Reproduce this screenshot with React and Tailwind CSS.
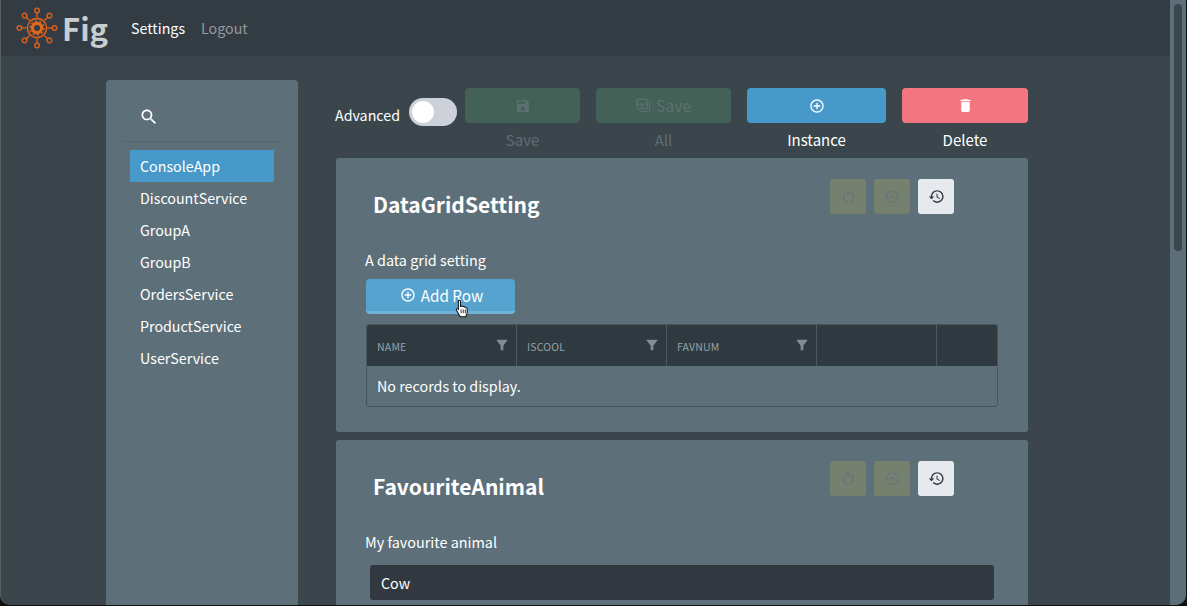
import React from "react";

const P = {
  save: "M17 3H5c-1.11 0-2 .9-2 2v14c0 1.1.89 2 2 2h14c1.1 0 2-.9 2-2V7l-4-4zm-5 16c-1.66 0-3-1.34-3-3s1.34-3 3-3 3 1.34 3 3-1.34 3-3 3zm3-10H5V5h10v4z",
  del: "M6 19c0 1.1.9 2 2 2h8c1.1 0 2-.9 2-2V7H6v12zM19 4h-3.5l-1-1h-5l-1 1H5v2h14V4z",
  history: "M13 3c-4.97 0-9 4.03-9 9H1l3.89 3.89.07.14L9 12H6c0-3.87 3.13-7 7-7s7 3.13 7 7-3.13 7-7 7c-1.93 0-3.68-.79-4.94-2.06l-1.42 1.42C8.27 19.99 10.51 21 13 21c4.97 0 9-4.03 9-9s-4.03-9-9-9zm-1 5v5l4.28 2.54.72-1.21-3.5-2.08V8H12z",
  backup: "M14 12c0-1.1-.9-2-2-2s-2 .9-2 2 .9 2 2 2 2-.9 2-2zm-2-9c-4.97 0-9 4.03-9 9H0l4 4 4-4H5c0-3.87 3.13-7 7-7s7 3.13 7 7-3.13 7-7 7c-1.51 0-2.91-.49-4.06-1.3l-1.42 1.44C8.04 20.3 9.94 21 12 21c4.97 0 9-4.03 9-9s-4.03-9-9-9z",
  restart: "M12 5V2L8 6l4 4V7c3.31 0 6 2.69 6 6 0 2.97-2.17 5.43-5 5.91v2.02c3.95-.49 7-3.85 7-7.93 0-4.42-3.58-8-8-8zm-6 8c0-1.65.67-3.15 1.76-4.24L6.34 7.34C4.9 8.79 4 10.79 4 13c0 4.08 3.05 7.44 7 7.93v-2.02c-2.83-.48-5-2.94-5-5.91z",
  search: "M15.5 14h-.79l-.28-.27C15.41 12.59 16 11.11 16 9.5 16 5.91 13.09 3 9.5 3S3 5.91 3 9.5 5.91 16 9.5 16c1.61 0 3.09-.59 4.23-1.57l.27.28v.79l5 4.99L20.49 19l-4.99-5zm-6 0C7.01 14 5 11.99 5 9.5S7.01 5 9.5 5 14 7.01 14 9.5 11.99 14 9.5 14z",
  filter: "M4.25 5.61C6.27 8.2 10 13 10 13v6c0 .55.45 1 1 1h2c.55 0 1-.45 1-1v-6s3.72-4.8 5.74-7.39c.51-.66.04-1.61-.79-1.61H5.04c-.83 0-1.3.95-.79 1.61z",
  add: "M13 7h-2v4H7v2h4v4h2v-4h4v-2h-4V7zm-1-5C6.48 2 2 6.48 2 12s4.48 10 10 10 10-4.48 10-10S17.52 2 12 2zm0 18c-4.41 0-8-3.59-8-8s3.59-8 8-8 8 3.59 8 8-3.59 8-8 8z",
};

function Ic({ d, className }) {
  return (
    <svg viewBox="0 0 24 24" className={className} fill="currentColor">
      <path d={d} />
    </svg>
  );
}

function SaveAllIcon({ className }) {
  return (
    <svg viewBox="0 0 16 16" className={className} fill="none" stroke="currentColor" strokeWidth="1.3">
      <rect x="1" y="1.5" width="11" height="10" rx="1.5" />
      <path d="M1 6.5h11M6.5 6.5v5" />
      <path d="M14.5 4v8.5a2 2 0 0 1-2 2H4" />
    </svg>
  );
}

function Logo() {
  const spokes = [0, 45, 90, 135, 180, 225, 270, 315];
  return (
    <svg viewBox="0 0 42 42" className="w-[42px] h-[42px]" fill="none" stroke="#d9601f">
      {spokes.map((a) => (
        <g key={a} transform={`rotate(${a} 21 21)`}>
          <path d="M21 10.5V5.5" strokeWidth="1.4" />
          <circle cx="21" cy="3.4" r="2.3" strokeWidth="1.4" />
        </g>
      ))}
      <circle cx="21" cy="21" r="9.6" strokeWidth="1.6" />
      <circle cx="21" cy="21" r="4.6" strokeWidth="3.2" stroke="#e0681f" />
      <circle cx="21" cy="21" r="7" strokeWidth="1.4" strokeDasharray="2.2 2.2" />
    </svg>
  );
}

function Cursor() {
  return (
    <svg viewBox="0 0 16 20" className="absolute left-[89px] top-[20px] w-[15px] h-[19px]">
      <path
        d="M4.5 1.2c.9 0 1.4.6 1.4 1.4v5.2l.9-.2.1-.1c.6-.2 1.2 0 1.5.5.6-.3 1.3-.1 1.6.5.6-.3 1.4 0 1.7.6.7-.1 1.3.4 1.3 1.2v3.6c0 2-1 3.4-1.6 4.8H5.6L2 12.6c-.7-.8-.8-1.6-.2-2.1.6-.5 1.3-.3 1.8.2V2.6c0-.8 0-1.4.9-1.4z"
        fill="#fff"
        stroke="#111"
        strokeWidth="1.1"
      />
      <path d="M6.5 11v4M8.8 11v4M11 11v4" stroke="#111" strokeWidth="0.9" />
    </svg>
  );
}

function ToolBtn({ w, bg, label, labelCls, children }) {
  return (
    <div className={`flex flex-col items-center ${w}`}>
      <div className={`w-full h-[35px] rounded-[4px] flex items-center justify-center ${bg}`}>{children}</div>
      <div className={`mt-[7px] text-[15px] leading-[20px] ${labelCls}`}>{label}</div>
    </div>
  );
}

function CardActions() {
  return (
    <div className="flex gap-2">
      <div className="w-9 h-[35px] rounded-[3px] bg-[#76806f] flex items-center justify-center text-[#66767c]">
        <Ic d={P.restart} className="w-[17px] h-[17px]" />
      </div>
      <div className="w-9 h-[35px] rounded-[3px] bg-[#76806f] flex items-center justify-center text-[#66767c]">
        <Ic d={P.backup} className="w-[17px] h-[17px]" />
      </div>
      <div className="w-9 h-[35px] rounded-[3px] bg-[#e6eaef] flex items-center justify-center text-[#343c43]">
        <Ic d={P.history} className="w-[17px] h-[17px]" />
      </div>
    </div>
  );
}

function CardHead({ title }) {
  return (
    <div className="flex items-start justify-between pl-[37px] pr-[74px]">
      <h2 className="text-[21px] leading-[30px] font-bold text-white mt-[10px]">{title}</h2>
      <CardActions />
    </div>
  );
}

function Th({ w, label, filter }) {
  return (
    <div className={`${w} h-full shrink-0 border-r border-[#4a5a62] pl-[10px] pr-[6px] flex items-center justify-between`}>
      <span className="text-[10.5px] text-[#93a2a9] tracking-[0.2px] mt-[3px]">{label}</span>
      {filter && <Ic d={P.filter} className="w-[16px] h-[16px] text-[#7e8e95] -mt-[1px]" />}
    </div>
  );
}

export default function App() {
  const services = ["DiscountService", "GroupA", "GroupB", "OrdersService", "ProductService", "UserService"];
  return (
    <div className="h-[606px] w-[1187px] overflow-hidden bg-[#111] pr-px pb-px" style={{ fontFamily: '"Noto Sans CJK SC","Noto Sans",sans-serif' }}>
      <div className="h-full flex overflow-hidden rounded-b-[10px] border-l border-[#5c5f62] bg-[#3a464c] text-white">
        <div className="flex-1 min-w-0 flex flex-col">
          <header className="h-14 shrink-0 bg-[#343c43] flex items-center pl-[15px]">
            <Logo />
            <span className="text-[31px] leading-none font-bold text-[#c9cdd0] ml-[4px] -mt-[2px]">Fig</span>
            <span className="ml-[23px] text-[14.25px] text-white">Settings</span>
            <span className="ml-4 text-[14.25px] text-[#959a9e]">Logout</span>
          </header>
          <div className="flex-1 min-h-0 flex pt-6 pl-[105px]">
            <aside className="w-[192px] shrink-0 bg-[#5d6f79] rounded-t-[4px] px-4 text-[14.25px]">
              <div className="h-[62px] border-b border-[#556670] pl-[18px] pt-[27px]">
                <Ic d={P.search} className="w-[20px] h-[20px] text-white -ml-[1px]" />
              </div>
              <div className="mt-2 ml-2 w-[144px] h-8 bg-[#4699c8] pl-[10px] flex items-center">ConsoleApp</div>
              {services.map((s) => (
                <div key={s} className="ml-2 h-8 pl-[10px] flex items-center">{s}</div>
              ))}
            </aside>
            <main className="ml-[38px] w-[692px] shrink-0 pt-2">
              <div className="flex items-start">
                <div className="flex items-start -ml-px w-[122px]">
                  <span className="text-[14.25px] leading-5 mt-[17px]">Advanced</span>
                  <div className="ml-auto mt-[10px] w-12 h-7 rounded-full bg-[#cdd2da] pl-[3px] flex items-center">
                    <div className="w-[22px] h-[22px] rounded-full bg-white" />
                  </div>
                </div>
                <div className="flex gap-4 ml-2">
                  <ToolBtn w="w-[115px]" bg="bg-[#436156]" label="Save" labelCls="text-[#5f6d74]">
                    <Ic d={P.save} className="w-[16px] h-[16px] text-[#5d6f70]" />
                  </ToolBtn>
                  <ToolBtn w="w-[135px]" bg="bg-[#436156]" label="All" labelCls="text-[#5f6d74]">
                    <span className="flex items-center gap-[5px] text-[#5d6f70] text-[16px] leading-5 -mt-[2px]">
                      <SaveAllIcon className="w-[15px] h-[15px] mt-[1px]" />
                      Save
                    </span>
                  </ToolBtn>
                  <ToolBtn w="w-[139px]" bg="bg-[#4699c8]" label="Instance" labelCls="text-white">
                    <Ic d={P.add} className="w-[16px] h-[16px] text-white" />
                  </ToolBtn>
                  <ToolBtn w="w-[126px]" bg="bg-[#f37680]" label="Delete" labelCls="text-white">
                    <Ic d={P.del} className="w-[17px] h-[17px] text-white" />
                  </ToolBtn>
                </div>
              </div>

              <section className="mt-[8px] h-[274px] bg-[#5d6f79] rounded-[3px] pt-[21px]">
                <CardHead title="DataGridSetting" />
                <div className="ml-[29px] mt-[31px] text-[14.4px] leading-5">A data grid setting</div>
                <div className="relative ml-[30px] mt-[9px] w-[149px] h-[35px] rounded-[4px] bg-[#56a3cf] border-b-[3px] border-[#72b3da] pl-[2px] flex items-center justify-center gap-[5px] text-[15.25px]">
                  <Ic d={P.add} className="w-[16px] h-[16px]" />
                  Add Row
                  <Cursor />
                </div>
                <div className="ml-[30px] mt-[10px] w-[632px] rounded-[3px] border border-[#46565e] overflow-hidden">
                  <div className="h-[41px] bg-[#2e3a40] flex">
                    <Th w="w-[150px]" label="NAME" filter />
                    <Th w="w-[150px]" label="ISCOOL" filter />
                    <Th w="w-[150px]" label="FAVNUM" filter />
                    <Th w="w-[120px]" />
                  </div>
                  <div className="h-[40px] pl-[10px] flex items-center text-[14.3px]">No records to display.</div>
                </div>
              </section>

              <section className="mt-[8px] h-[200px] bg-[#5d6f79] rounded-[3px] pt-[21px]">
                <CardHead title="FavouriteAnimal" />
                <div className="ml-[29px] mt-[31px] text-[14.4px] leading-5">My favourite animal</div>
                <div className="ml-[34px] mt-[13px] w-[624px] h-[35px] rounded-[3px] bg-[#31383f] pl-[11px] flex items-center text-[14.25px]">Cow</div>
              </section>
            </main>
          </div>
        </div>
        <div className="w-4 shrink-0 bg-[#5c6f79] pt-1 px-1">
          <div className="w-2 h-[247px] rounded-full bg-[#3a464c]" />
        </div>
      </div>
    </div>
  );
}
